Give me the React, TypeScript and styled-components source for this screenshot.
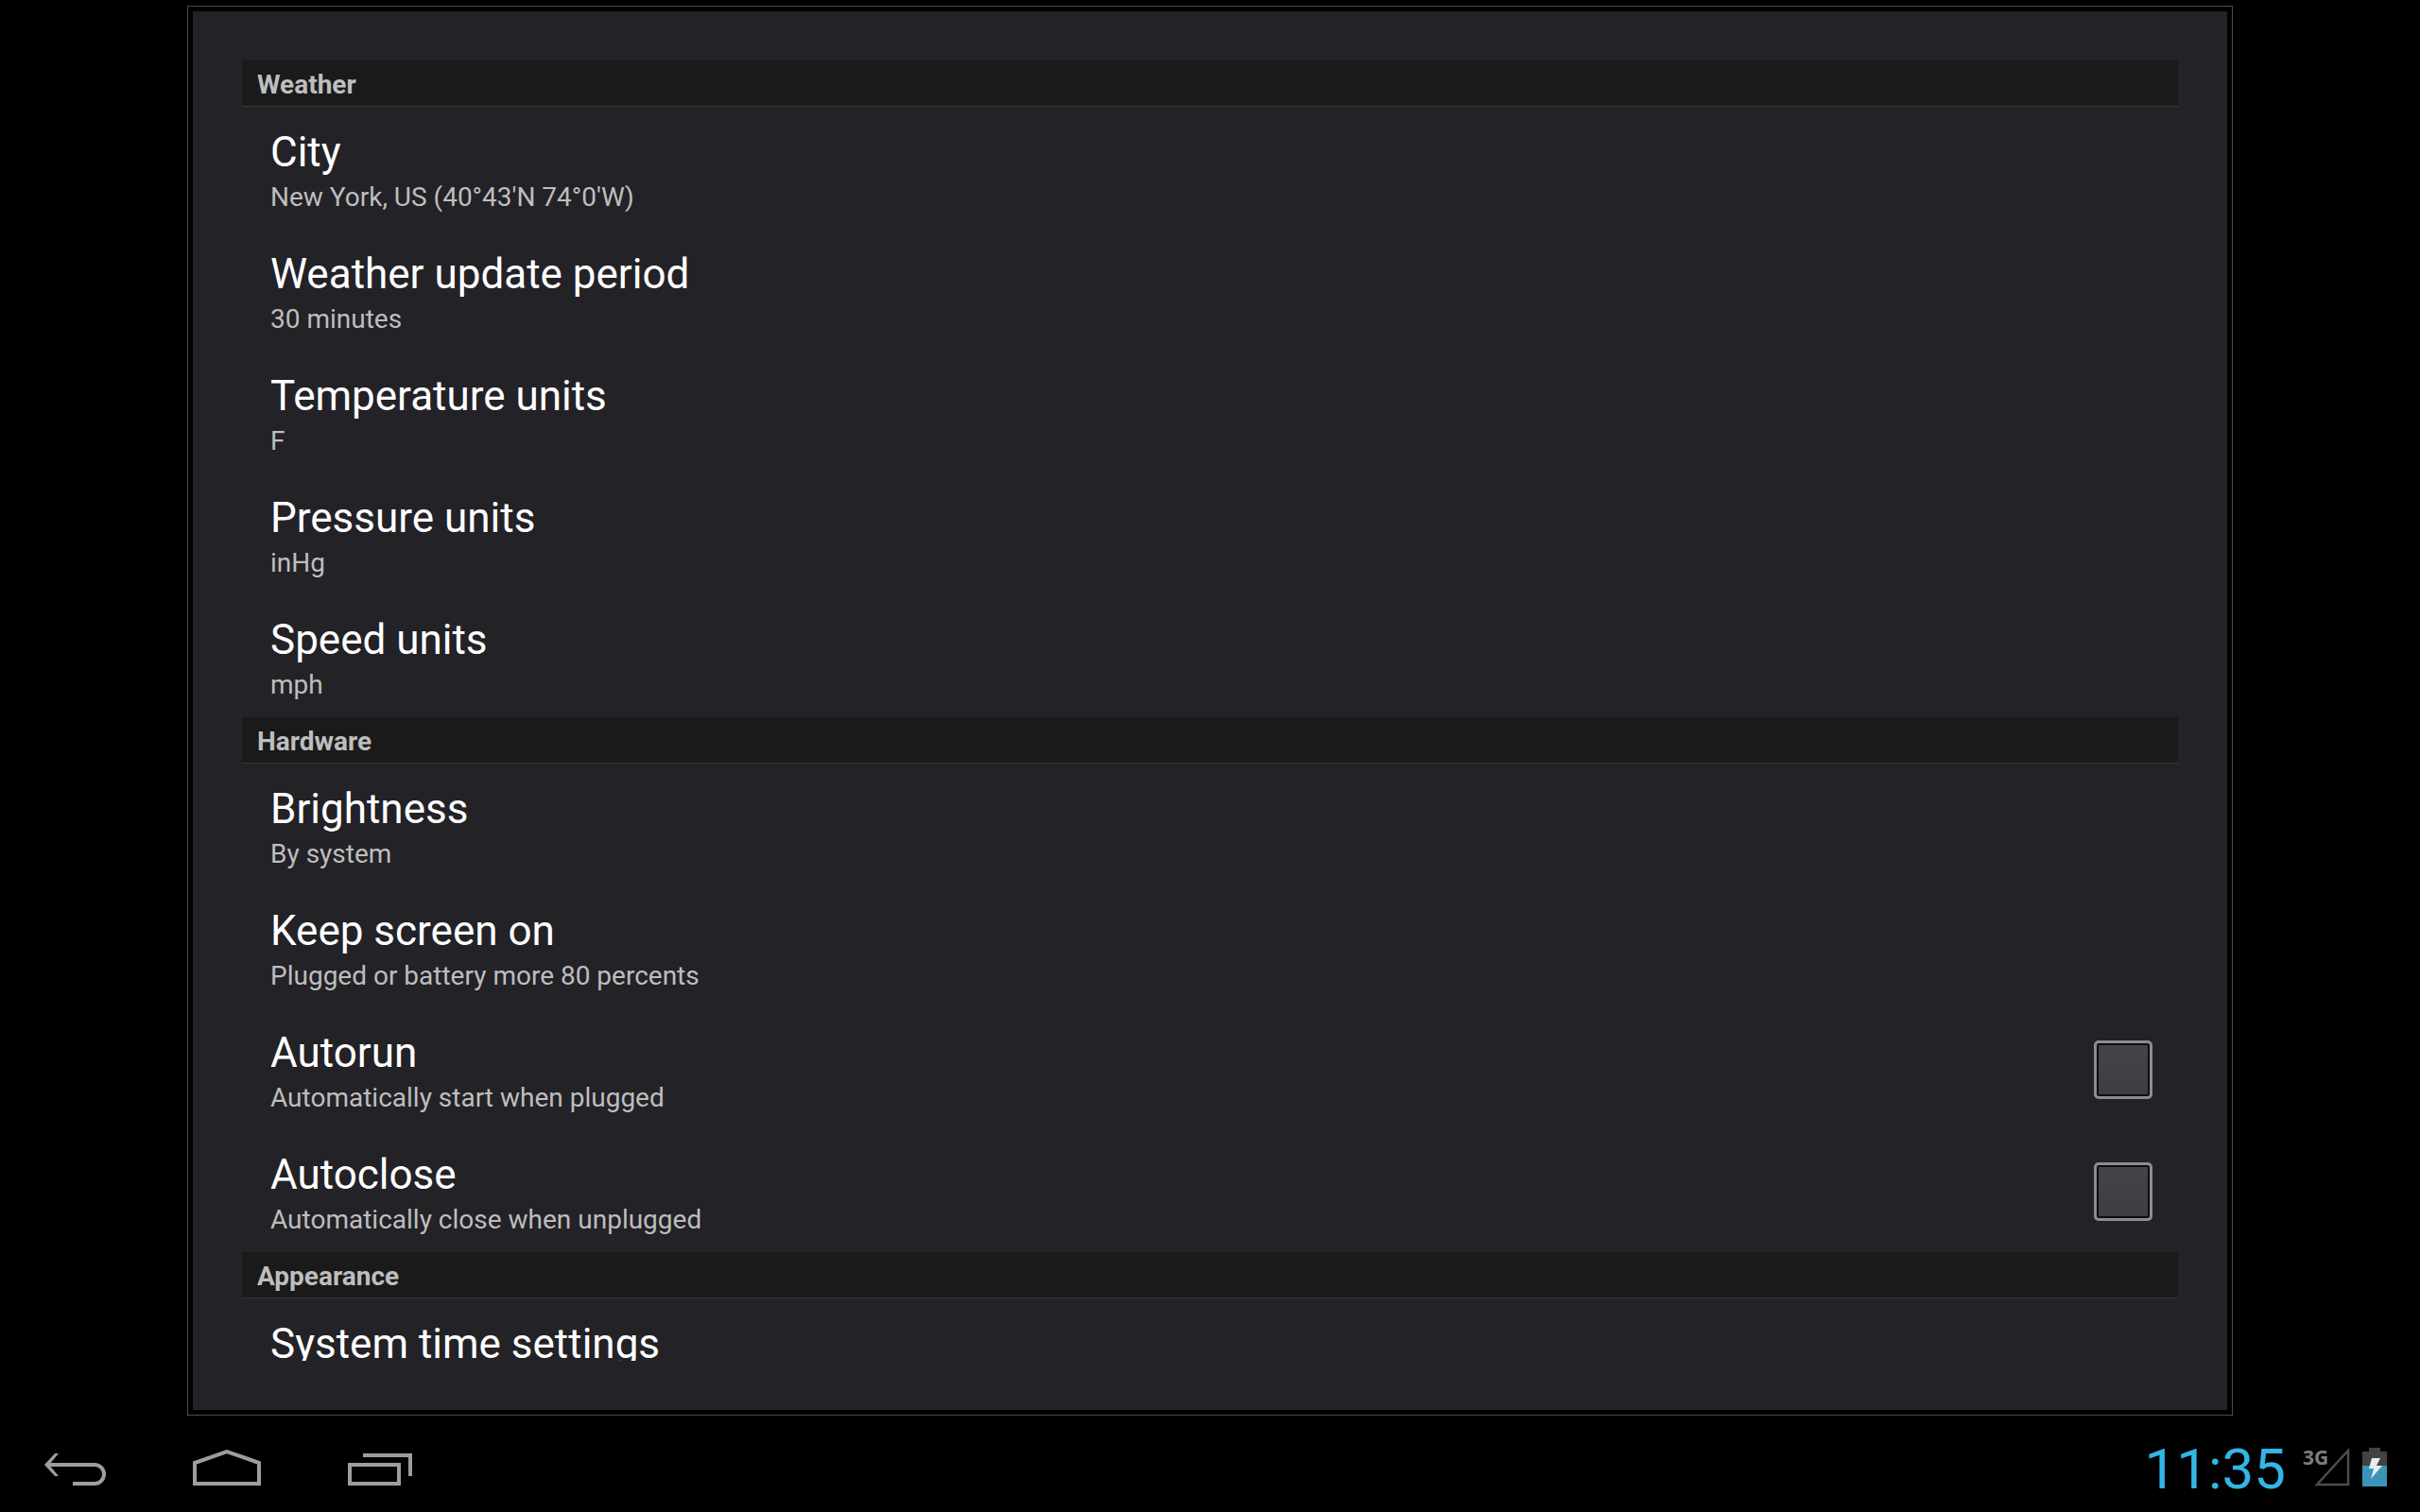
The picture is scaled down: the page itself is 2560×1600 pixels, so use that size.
import React from "react";
import styled, { createGlobalStyle, css } from "styled-components";

const GlobalStyle = createGlobalStyle`
  *, *::before, *::after { box-sizing: border-box; }
  body {
    margin: 0;
    background: #000;
    color: #fff;
    font-family: Roboto, "Noto Sans", sans-serif;
  }
`;

const Screen = styled.div`
  display: flex;
  flex-direction: column;
  height: 100vh;
`;

const Dialog = styled.main`
  flex: 1;
  min-height: 0;
  display: flex;
  margin: 6px 198px;
  padding: 5px;
  border: 1px solid #4c4c4c;
  background: #000;
`;

const Panel = styled.div`
  flex: 1;
  display: flex;
  padding: 52px;
  background: #232227;
`;

const List = styled.div`
  flex: 1;
  overflow: hidden;
`;

const SectionTitle = styled.h2`
  display: flex;
  align-items: center;
  height: 49px;
  margin: 0;
  padding: 4px 16px 0;
  border-bottom: 1px solid #363636;
  background: #1a1a1a;
  color: #bebebe;
  font-size: 28px;
  font-weight: 700;
  line-height: 32px;
`;

const rowStyle = css`
  display: flex;
  align-items: center;
  justify-content: space-between;
  width: 100%;
  height: 129px;
  margin: 0;
  padding: 0 27px 0 30px;
  border: 0;
  border-top: 1px solid #242427;
  background: none;
  color: inherit;
  font: inherit;
  text-align: left;
  cursor: pointer;
`;

const ButtonRow = styled.button`
  ${rowStyle}
`;

const CheckRow = styled.label`
  ${rowStyle}
`;

const RowText = styled.span`
  display: flex;
  flex-direction: column;
  padding-top: 10px;
`;

const RowTitle = styled.span`
  font-size: 44px;
  line-height: 52px;
`;

const RowSummary = styled.span`
  color: #bebebe;
  font-size: 28px;
  line-height: 44px;
`;

const CheckBox = styled.input`
  appearance: none;
  width: 62px;
  height: 62px;
  margin: 2px 0 0;
  border: 3px solid #8d8c8f;
  border-radius: 5px;
  background: linear-gradient(#454448, #3e3d41);
  box-shadow: inset 0 0 0 2px #0e0e10;
  cursor: pointer;

  &:checked {
    background: #33b5e5;
  }
`;

const Section = styled.section`
  padding-bottom: 1px;
`;

const SystemBar = styled.footer`
  display: flex;
  align-items: center;
  justify-content: space-between;
  height: 96px;
  padding-right: 34px;
`;

const NavGroup = styled.nav`
  display: flex;
`;

const StatusGroup = styled.div`
  display: flex;
  align-items: center;
  gap: 12px;
`;

const NavButton = styled.button`
  width: 160px;
  height: 96px;
  padding: 0;
  border: 0;
  background: none;
  cursor: pointer;

  svg { display: block; }
`;

const Clock = styled.time`
  padding: 6px 6px 0 0;
  color: #33b5e5;
  font-size: 60px;
  line-height: 72px;
`;

const SignalBox = styled.span`
  display: grid;
  width: 50px;
  height: 42px;

  > * { grid-area: 1 / 1; }
`;

const NetworkType = styled.span`
  color: #7d7d7d;
  font-family: "Open Sans", sans-serif;
  font-size: 21px;
  font-weight: 700;
  line-height: 22px;
`;

const SignalShape = styled.svg`
  justify-self: end;
`;

type Item = { title: string; summary?: string; checkable?: boolean };

const settings: { title: string; items: Item[] }[] = [
  {
    title: "Weather",
    items: [
      { title: "City", summary: "New York, US (40°43'N 74°0'W)" },
      { title: "Weather update period", summary: "30 minutes" },
      { title: "Temperature units", summary: "F" },
      { title: "Pressure units", summary: "inHg" },
      { title: "Speed units", summary: "mph" },
    ],
  },
  {
    title: "Hardware",
    items: [
      { title: "Brightness", summary: "By system" },
      { title: "Keep screen on", summary: "Plugged or battery more 80 percents" },
      { title: "Autorun", summary: "Automatically start when plugged", checkable: true },
      { title: "Autoclose", summary: "Automatically close when unplugged", checkable: true },
    ],
  },
  {
    title: "Appearance",
    items: [{ title: "System time settings" }],
  },
];

function Preference({ title, summary, checkable }: Item) {
  const text = (
    <RowText>
      <RowTitle>{title}</RowTitle>
      <RowSummary>{summary ?? "\u00a0"}</RowSummary>
    </RowText>
  );
  return checkable ? (
    <CheckRow>
      {text}
      <CheckBox type="checkbox" />
    </CheckRow>
  ) : (
    <ButtonRow type="button">{text}</ButtonRow>
  );
}

function BackIcon() {
  return (
    <svg width="160" height="96" fill="none" stroke="#9c9e9c" strokeWidth="4">
      <path d="M51 46h49a10 10 0 0 1 0 20H77" />
      <path d="M62 34h-4L47 46l11 12h4L52 46z" fill="#9c9e9c" stroke="none" />
    </svg>
  );
}

function HomeIcon() {
  return (
    <svg width="160" height="96" fill="none" stroke="#9c9e9c" strokeWidth="4">
      <path d="M46 66V44l34-12 34 12v22z" />
    </svg>
  );
}

function RecentIcon() {
  return (
    <svg width="160" height="96" fill="none" stroke="#9c9e9c" strokeWidth="4">
      <path d="M50 46h52v20H50z" />
      <path d="M64 36h50v22" />
    </svg>
  );
}

export default function App() {
  return (
    <>
      <GlobalStyle />
      <Screen>
        <Dialog>
          <Panel>
            <List>
              {settings.map((section) => (
                <Section key={section.title}>
                  <SectionTitle>{section.title}</SectionTitle>
                  {section.items.map((item) => (
                    <Preference key={item.title} {...item} />
                  ))}
                </Section>
              ))}
            </List>
          </Panel>
        </Dialog>
        <SystemBar>
          <NavGroup>
            <NavButton type="button" aria-label="Back"><BackIcon /></NavButton>
            <NavButton type="button" aria-label="Home"><HomeIcon /></NavButton>
            <NavButton type="button" aria-label="Recent apps"><RecentIcon /></NavButton>
          </NavGroup>
          <StatusGroup>
            <Clock>11:35</Clock>
            <SignalBox>
              <NetworkType>3G</NetworkType>
              <SignalShape width="38" height="42" fill="none" stroke="#4d4d4d" strokeWidth="2.5">
                <path d="M36 4v36H3z" />
              </SignalShape>
            </SignalBox>
            <svg width="28" height="42">
              <path d="M1 5h7V1h12v4h7v16H1z" fill="#424242" />
              <path d="M1 20h26v22H1z" fill="#3a94b9" />
              <path d="M11 12h9l-4 8h6L10 34l3-11H8z" fill="#e4ecef" />
            </svg>
          </StatusGroup>
        </SystemBar>
      </Screen>
    </>
  );
}
